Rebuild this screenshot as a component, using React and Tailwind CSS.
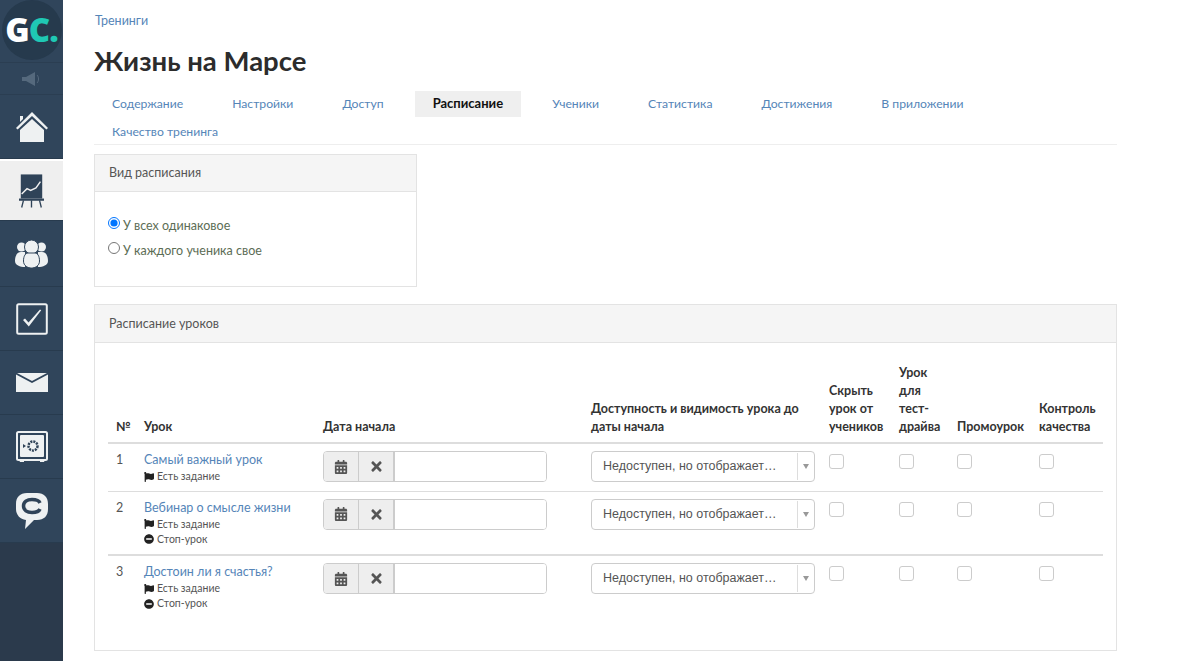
import React from "react";
import { FaCalendarAlt, FaTimes, FaFlag, FaMinusCircle } from "react-icons/fa";

const tabs = ["Содержание", "Настройки", "Доступ", "Расписание", "Ученики", "Статистика", "Достижения", "В приложении", "Качество тренинга"];

const lessons = [
  { n: 1, title: "Самый важный урок", stop: false, cell: "h-[48px]", line: "border-b" },
  { n: 2, title: "Вебинар о смысле жизни", stop: true, cell: "h-[64px]", line: "border-b-2" },
  { n: 3, title: "Достоин ли я счастья?", stop: true, cell: "h-[63px]", line: "" },
];

const HomeIcon = () => (
  <svg width="34" height="32" viewBox="0 0 34 32" fill="#eef1f2">
    <path d="M5 5h3v3l-3 3z" />
    <path d="M17 1 33 17l-1.600 1.600L17 5 2.600 18.600 1 17z" />
    <path d="M17 8 29 19v12H5V19z" />
  </svg>
);

const ChartIcon = () => (
  <svg width="25" height="35" viewBox="0 0 28 38">
    <rect x="2" y="1" width="24" height="27" fill="#2f4358" />
    <path d="M3 23 9 17l4 2 6-3 5-7" fill="none" stroke="#f0f0f0" strokeWidth="1.600" />
    <rect x="0" y="28" width="28" height="2.500" fill="#2f4358" />
    <path d="M5 30 3 38M14 30v8M23 30l2 8" stroke="#2f4358" strokeWidth="1.500" />
  </svg>
);

const UsersIcon = () => (
  <svg width="33" height="28" viewBox="0 0 33 28" fill="#eef1f2">
    <circle cx="6.500" cy="7" r="4.500" />
    <circle cx="26.500" cy="7" r="4.500" />
    <path d="M0 21c0-5 2-9 6-9h4v15c-5 0-10-2-10-6zM33 21c0-5-2-9-6-9h-4v15c5 0 10-2 10-6z" />
    <g stroke="#30455b" strokeWidth="1">
      <circle cx="16.500" cy="7" r="7" />
      <path d="M8.500 21c0-5 2-8 4.500-8h7c2.500 0 4.500 3 4.500 8 0 5-4.500 7-8 7s-8-2-8-7z" />
    </g>
  </svg>
);

const CheckIcon = () => (
  <svg width="32" height="32" viewBox="0 0 32 32" fill="none">
    <rect x="1.200" y="1.200" width="29.600" height="29.600" rx="1.500" stroke="#eef1f2" strokeWidth="2" />
    <path d="M7 17l2-1.500 3.500 4L24 6.500l1.200.8-12.400 16.200z" fill="#eef1f2" />
  </svg>
);

const MailIcon = () => (
  <svg width="32" height="19" viewBox="0 0 32 19" fill="#eef1f2">
    <path d="M0 1.500 16 10 32 1.500V19H0z" />
    <path d="M1 0h30L16 8z" />
  </svg>
);

const SafeIcon = () => (
  <svg width="32" height="32" viewBox="0 0 32 32" fill="none">
    <rect x="1" y="1" width="30" height="28" rx="1.500" stroke="#eef1f2" strokeWidth="2" />
    <rect x="4" y="4" width="24" height="22" rx="1" fill="#eef1f2" />
    <path d="M3 29h5v2H4zM24 29h5l-1 2h-4z" fill="#eef1f2" />
    <circle cx="17" cy="15" r="4.500" stroke="#2f4358" strokeWidth="2.500" strokeDasharray="2 1" />
    <path d="M7 13 10 15 7 17z" fill="#2f4358" />
  </svg>
);

const ChatIcon = () => (
  <svg width="32" height="36" viewBox="0 0 32 36">
    <path d="M11 0h10c7 0 11 4 11 11v5c0 7-4 11-11 11h-3l-9 9 1-9C4 26 0 22 0 16v-5C0 4 4 0 11 0z" fill="#eef1f2" />
    <path d="M24 10c-1-2.500-4-3.500-8-3.500-5 0-8.500 2.500-8.500 6.500s3.500 6.500 8.500 6.500c4 0 7-1 8-3.500" fill="none" stroke="#2f4358" strokeWidth="3.500" />
    <rect x="14" y="11.500" width="10" height="2.500" fill="#eef1f2" />
  </svg>
);

const SideItem = ({ className = "h-[64px]", children }) => (
  <div className={`flex items-center justify-center border-b border-[#283b4e] ${className}`}>
    {children}
  </div>
);

const Sidebar = () => (
  <aside className="w-[63px] shrink-0 bg-[#2b3a4c] flex flex-col">
    <div className="bg-[#30455b]">
      <div className="h-[63px] border-b border-[#2b3e52] flex items-start justify-center">
        <div className="w-[60px] h-[60px] rounded-full bg-[#263a4d] flex items-center justify-center font-['Open_Sans',sans-serif] font-extrabold text-[33px] tracking-[-1px]">
          <span className="text-white">G</span>
          <span className="text-[#1fc8b4]">C.</span>
        </div>
      </div>
      <div className="h-[32px] flex items-center justify-center border-b border-[#2b3e52]">
        <svg width="20" height="14" viewBox="0 0 20 14" fill="#55697d">
          <path d="M0 5h4l9-5v14L4 9H0z" />
          <path d="M15 3c2 2 2 6 0 8" fill="none" stroke="#55697d" />
        </svg>
      </div>
      <SideItem><HomeIcon /></SideItem>
      <SideItem className="h-[62px] bg-[#efefef] border-t-2 border-t-white"><ChartIcon /></SideItem>
      <SideItem className="h-[66px]"><UsersIcon /></SideItem>
      <SideItem><CheckIcon /></SideItem>
      <SideItem><MailIcon /></SideItem>
      <SideItem><SafeIcon /></SideItem>
      <SideItem><ChatIcon /></SideItem>
    </div>
  </aside>
);

const LessonRow = ({ lesson }) => (
  <tr className={`border-[#ddd] align-top ${lesson.line}`}>
    <td className={`pl-2 pt-[7px] text-[#555] ${lesson.cell}`}>{lesson.n}</td>
    <td className="pl-2 pt-[7px]">
      <a className="block text-[#5585b8] leading-[18px]">{lesson.title}</a>
      <div className="flex items-center gap-[3px] text-[10.5px] leading-[15px] text-[#555]">
        <FaFlag className="text-[10px] text-[#222]" />
        Есть задание
      </div>
      {lesson.stop && (
        <div className="flex items-center gap-[3px] text-[10.5px] leading-[15px] text-[#555]">
          <FaMinusCircle className="text-[10px] text-[#222]" />
          Стоп-урок
        </div>
      )}
    </td>
    <td className="pl-2 pt-[7px]">
      <div className="flex h-[31px] w-[224px] border border-[#ccc] rounded-[4px] overflow-hidden">
        <span className="w-[35px] flex items-center justify-center bg-[#eee] border-r border-[#ccc] text-[#555]">
          <FaCalendarAlt className="text-[14px]" />
        </span>
        <span className="w-[36px] flex items-center justify-center bg-[#eee] border-r-2 border-[#ccc] text-[#555]">
          <FaTimes className="text-[15px]" />
        </span>
        <input className="flex-1 min-w-0 bg-white" />
      </div>
    </td>
    <td className="pl-2 pt-[7px]">
      <div className="flex h-[31px] w-[224px] border border-[#ccc] rounded-[4px] font-[Liberation_Sans,Arial,sans-serif] text-[12.5px] text-[#555]">
        <span className="flex-1 pl-[11px] leading-[29px] whitespace-nowrap">Недоступен, но отображает…</span>
        <span className="w-[17px] my-[1px] flex items-center justify-center border-l border-[#ddd]">
          <span className="border-x-[3px] border-x-transparent border-t-[5px] border-t-[#999]" />
        </span>
      </div>
    </td>
    {[0, 1, 2, 3].map((i) => (
      <td key={i} className="pl-2 pt-[10px]">
        <span className="block w-[15px] h-[15px] border border-[#ccc] rounded-[3px] bg-white" />
      </td>
    ))}
  </tr>
);

export default function App() {
  return (
    <div className="flex min-h-screen bg-white font-[Lato,sans-serif] text-[12.5px] text-[#333]">
      <Sidebar />
      <main className="w-[1023px] ml-[31px]">
        <a className="block mt-[13px] ml-[1px] leading-[15px] text-[#5585b8]">Тренинги</a>
        <h1 className="mt-[15px] text-[27.5px] leading-[36px] font-bold text-[#2c2c2c]">Жизнь на Марсе</h1>

        <nav className="mt-[12px] flex flex-wrap gap-y-[1px] border-b border-[#eee]">
          {tabs.map((tab) => (
            <a
              key={tab}
              className={`px-[18px] mr-[13px] h-[26px] leading-[25px] last:leading-[27px] ${
                tab === "Расписание" ? "bg-[#efefef] text-[#111] text-[13px] font-bold" : "text-[#5585b8] text-[12.2px]"
              }`}
            >
              {tab}
            </a>
          ))}
        </nav>

        <section className="mt-[9px] w-[323px] h-[133px] border border-[#e3e3e3]">
          <div className="h-[37px] bg-[#f5f5f5] border-b border-[#e3e3e3] px-[14px] leading-[36px] text-[#555]">Вид расписания</div>
          <div className="pt-[25px] pl-[13px] text-[#5c6d55] flex flex-col gap-[7px]">
            <label className="flex items-center gap-[3px] h-[18px]">
              <input type="radio" name="kind" defaultChecked className="m-0 mb-[7px] w-[12px] h-[12px]" />
              У всех одинаковое
            </label>
            <label className="flex items-center gap-[3px] h-[18px]">
              <input type="radio" name="kind" className="m-0 mb-[7px] w-[12px] h-[12px]" />
              У каждого ученика свое
            </label>
          </div>
        </section>

        <section className="mt-[17px] h-[347px] border border-[#e3e3e3]">
          <div className="h-[38px] bg-[#f5f5f5] border-b border-[#e3e3e3] px-[14px] leading-[38px] text-[#555]">Расписание уроков</div>
          <div className="px-[13px] pt-[21px]">
            <table className="table-fixed w-[995px] border-collapse">
              <colgroup>
                <col className="w-[28px]" />
                <col className="w-[179px]" />
                <col className="w-[268px]" />
                <col className="w-[238px]" />
                <col className="w-[70px]" />
                <col className="w-[58px]" />
                <col className="w-[82px]" />
                <col className="w-[72px]" />
              </colgroup>
              <thead>
                <tr className="border-b-2 border-[#ddd] align-bottom text-left font-bold leading-[18px] text-[#333]">
                  <th className="pl-2 pb-[6px]">№</th>
                  <th className="pl-2 pb-[6px]">Урок</th>
                  <th className="pl-2 pb-[6px]">Дата начала</th>
                  <th className="pl-2 pb-[6px]">Доступность и видимость урока до даты начала</th>
                  <th className="pl-2 pb-[6px]">Скрыть урок от учеников</th>
                  <th className="pl-2 pb-[6px]">Урок для тест-драйва</th>
                  <th className="pl-2 pb-[6px]">Промоурок</th>
                  <th className="pl-2 pb-[6px]">Контроль качества</th>
                </tr>
              </thead>
              <tbody>
                {lessons.map((lesson) => (
                  <LessonRow key={lesson.n} lesson={lesson} />
                ))}
              </tbody>
            </table>
          </div>
        </section>
      </main>
    </div>
  );
}
